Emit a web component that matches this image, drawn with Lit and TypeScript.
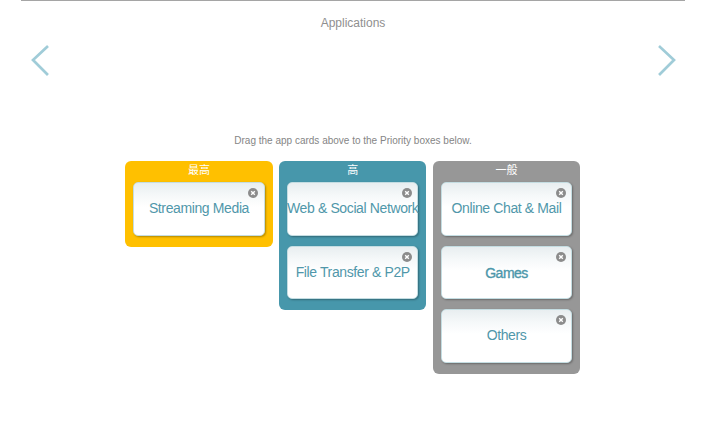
import { LitElement, html, css, svg } from "lit";
import { customElement } from "lit/decorators.js";

type Card = { name: string; bold?: boolean };
type Col = { label: string; tone: string; cards: Card[] };

const COLS: Col[] = [
  { label: "最高", tone: "gold", cards: [{ name: "Streaming Media" }] },
  { label: "高", tone: "teal", cards: [{ name: "Web & Social Network" }, { name: "File Transfer & P2P" }] },
  { label: "一般", tone: "grey", cards: [{ name: "Online Chat & Mail" }, { name: "Games", bold: true }, { name: "Others" }] },
];

@customElement("app-root")
export class AppRoot extends LitElement {
  static styles = css`
    :host {
      display: block;
      width: 728px;
      height: 431px;
      background: #fff;
      font-family: "Liberation Sans", Arial, sans-serif;
      overflow: hidden;
    }
    .page {
      width: 664px;
      margin-left: 21px;
      border-top: 1px solid #a5a5a5;
      display: flex;
      flex-direction: column;
      align-items: center;
    }
    .title {
      margin-top: 15px;
      height: 14px;
      line-height: 14px;
      font-size: 12px;
      color: #8f8f8f;
    }
    .nav {
      align-self: stretch;
      display: flex;
      justify-content: space-between;
      padding: 15px 9px 0 10px;
    }
    .nav svg {
      display: block;
      width: 18px;
      height: 32px;
    }
    .hint {
      margin-top: 58px;
      height: 12px;
      line-height: 12px;
      font-size: 10px;
      color: #858585;
    }
    .cols {
      margin-top: 14.3px;
      margin-right: 0.5px;
      display: flex;
      align-items: flex-start;
      gap: 6.4px;
    }
    .col {
      width: 147.4px;
      box-sizing: border-box;
      border-radius: 6px;
      padding: 0 8px 11px;
      display: flex;
      flex-direction: column;
      gap: 10px;
    }
    .col.gold { background: #ffc000; }
    .col.teal { background: #4797ab; }
    .col.grey { background: #979797; }
    .label {
      height: 21px;
      line-height: 18px;
      margin-bottom: -10px;
      text-align: center;
      font-size: 11px;
      color: #fff;
      font-family: "Liberation Sans", "Noto Sans CJK SC", sans-serif;
    }
    .card {
      position: relative;
      height: 53.5px;
      box-sizing: border-box;
      border-radius: 5px;
      border: 1px solid #c4dde2;
      background: linear-gradient(#e8eef0 0, #f5f8f9 12px, #fff 24px);
      box-shadow: 1px 1px 2px rgba(0, 0, 0, 0.3);
      display: flex;
      justify-content: center;
      padding-top: 17px;
      font-size: 14px;
      letter-spacing: -0.38px;
      line-height: 17px;
      color: #5097aa;
      white-space: nowrap;
    }
    .card.bold {
      padding-top: 18px;
      letter-spacing: -0.5px;
      -webkit-text-stroke: 0.35px #4797ab;
    }
    .close {
      position: absolute;
      top: 5px;
      right: 5.5px;
      width: 10px;
      height: 10px;
      display: block;
    }
  `;

  private arrow(d: string) {
    return html`<svg viewBox="0 0 18 32" fill="none">
      ${svg`<path d=${d} stroke="#a0ccd8" stroke-width="2.7" stroke-linecap="square" />`}
    </svg>`;
  }

  render() {
    return html`<div class="page">
      <div class="title">Applications</div>
      <div class="nav">
        ${this.arrow("M16 2 L2 15 L16 29")}
        ${this.arrow("M2 2 L16 15 L2 29")}
      </div>
      <div class="hint">Drag the app cards above to the Priority boxes below.</div>
      <div class="cols">
        ${COLS.map(
          (c) => html`<div class="col ${c.tone}">
            <div class="label">${c.label}</div>
            ${c.cards.map(
              (k) => html`<div class="card ${k.bold ? "bold" : ""}">
                <svg class="close" viewBox="0 0 10 10">
                  <circle cx="5" cy="5" r="5" fill="#8c8c8c" />
                  <path d="M3.2 3.2 L6.8 6.8 M6.8 3.2 L3.2 6.8" stroke="#fff" stroke-width="1.4" />
                </svg>
                ${k.name}
              </div>`
            )}
          </div>`
        )}
      </div>
    </div>`;
  }
}
